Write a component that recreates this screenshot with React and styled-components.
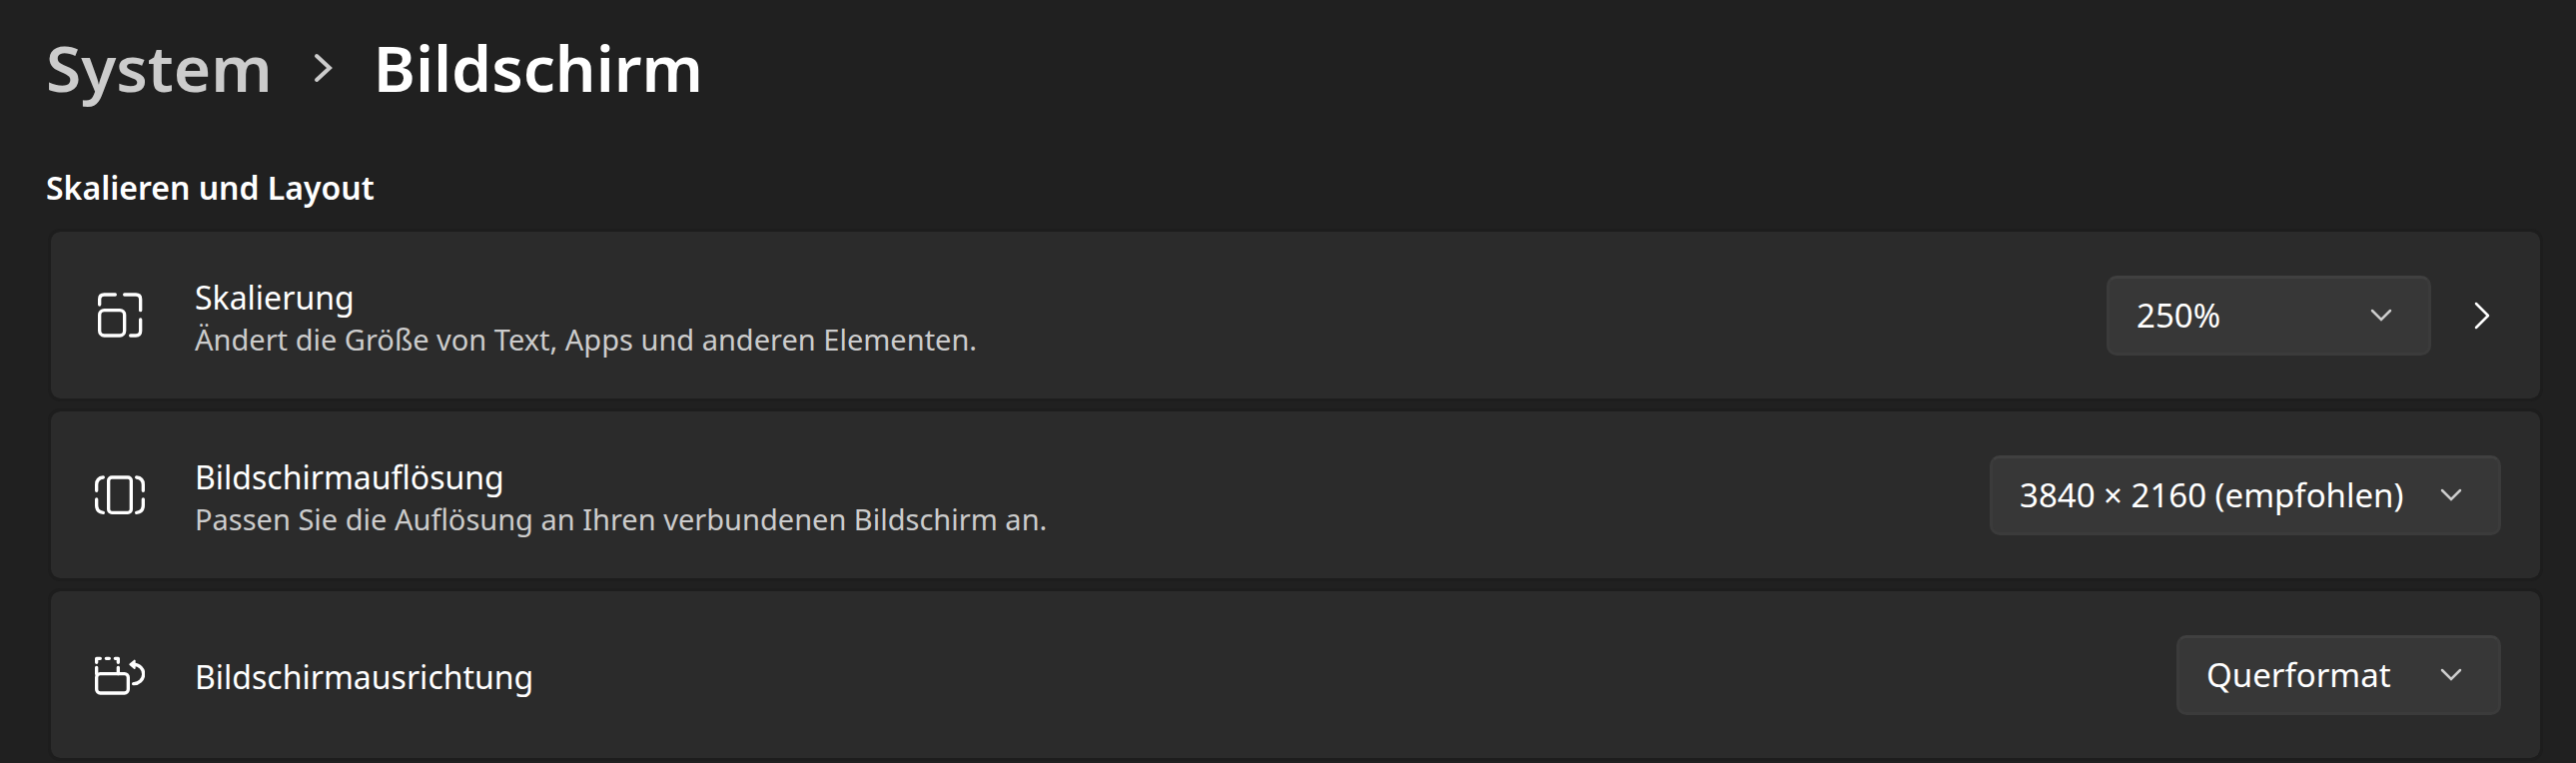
import React, { useState } from "react";
import styled, { createGlobalStyle } from "styled-components";

// Styles
const GlobalStyle = createGlobalStyle`
    * {
        box-sizing: border-box;
    }
    body {
        margin: 0;
        background: #202020;
        color: #fff;
        font-family: "Noto Sans", "Open Sans", sans-serif;
    }
`
const Page = styled.main`
    padding: 20px 33px 0 46px;
`
const Breadcrumb = styled.nav`
    display: flex;
    align-items: center;
    height: 96px;
    font-size: 64px;
    font-weight: 600;
    line-height: 96px;
`
const CrumbLink = styled.a`
    color: #cccccc;
    text-decoration: none;
`
const CrumbChevron = styled.svg`
    width: 20px;
    height: 30px;
    margin: 0 40px 0 41px;
    color: #cccccc;
`
const CrumbTitle = styled.h1`
    margin: 0;
    font-size: 64px;
    font-weight: 600;
`
const SectionTitle = styled.h2`
    margin: 48px 0 17px;
    font-size: 32px;
    font-weight: 600;
    line-height: 48px;
`
const CardList = styled.div`
    display: flex;
    flex-direction: column;
    gap: 7px;
    padding-left: 2px;
`
const Card = styled.section`
    display: flex;
    align-items: center;
    min-height: 173px;
    padding: 0 39px 0 44px;
    background: #2b2b2b;
    background-clip: padding-box;
    border: 3px solid #1d1d1d;
    border-radius: 12px;
`
const CardIcon = styled.svg`
    flex: none;
    width: 50px;
    height: 50px;
    margin-right: 50px;
    fill: none;
    stroke: #fff;
    stroke-width: 10;
    stroke-linecap: round;
    stroke-linejoin: round;
`
const CardText = styled.div`
    flex: 1;
    padding-top: 4px;
`
const CardLabel = styled.label`
    display: block;
    font-size: 32px;
    line-height: 44px;
`
const CardHint = styled.p`
    margin: 0;
    font-size: 29px;
    line-height: 40px;
    color: #cccccc;
`
const SelectBox = styled.div`
    display: grid;
    align-items: center;
    min-width: 325px;
`
const Select = styled.select`
    grid-area: 1 / 1;
    appearance: none;
    height: 80px;
    padding: 0 94px 0 27px;
    background: #373737;
    border: 3px solid #3b3b3b;
    border-top-color: #404040;
    border-radius: 10px;
    color: #fff;
    font-family: inherit;
    font-size: 33px;
`
const SelectChevron = styled.svg`
    grid-area: 1 / 1;
    justify-self: end;
    width: 22px;
    height: 13px;
    margin-right: 39px;
    color: #cccccc;
    pointer-events: none;
`
const MoreButton = styled.button`
    display: flex;
    margin: 0 10px 0 42px;
    padding: 0;
    background: transparent;
    border: none;
    color: #fff;
    cursor: pointer;
`
const MoreChevron = styled.svg`
    width: 18px;
    height: 30px;
`

const ScaleIcon = () => (
    <CardIcon viewBox="0 0 150 150" aria-hidden="true">
        <path d="M14 42V26Q14 12 28 12H61M89 12H123Q137 12 137 26V59M137 87V121Q137 135 123 135H107" />
        <rect x="14" y="59" width="75" height="76" rx="14" />
    </CardIcon>
)

const ResolutionIcon = () => (
    <CardIcon viewBox="0 0 150 150" aria-hidden="true">
        <rect x="41" y="21" width="68" height="106" rx="10" />
        <path d="M25 21Q5 23 5 43V61M5 87V105Q5 125 25 127M125 21Q145 23 145 43V61M145 87V105Q145 125 125 127" />
    </CardIcon>
)

const OrientationIcon = () => (
    <CardIcon viewBox="0 0 150 150" aria-hidden="true">
        <path d="M5 37V25H16M34 25H43M61 25H70V37M5 52V71M70 52V71" />
        <rect x="5" y="71" width="95" height="58" rx="11" />
        <path d="M118 43A29 29 0 0 1 116 101" />
        <path d="M106 43L119 32V54Z" fill="#fff" strokeWidth="6" />
    </CardIcon>
)

// Constants
const settings = [
    {
        id: "scale",
        icon: ScaleIcon,
        label: "Skalierung",
        hint: "Ändert die Größe von Text, Apps und anderen Elementen.",
        value: "250%",
        hasMore: true
    },
    {
        id: "resolution",
        icon: ResolutionIcon,
        label: "Bildschirmauflösung",
        hint: "Passen Sie die Auflösung an Ihren verbundenen Bildschirm an.",
        value: "3840 × 2160 (empfohlen)"
    },
    {
        id: "orientation",
        icon: OrientationIcon,
        label: "Bildschirmausrichtung",
        value: "Querformat"
    }
];

function SettingCard({ setting }) {
    const [value, setValue] = useState(setting.value);
    const Icon = setting.icon;

    return (
        <Card>
            <Icon />
            <CardText>
                <CardLabel htmlFor={setting.id}>{setting.label}</CardLabel>
                {setting.hint && <CardHint>{setting.hint}</CardHint>}
            </CardText>
            <SelectBox>
                <Select id={setting.id} value={value} onChange={(e) => setValue(e.target.value)}>
                    <option>{setting.value}</option>
                </Select>
                <SelectChevron viewBox="0 0 22 13" fill="none" stroke="currentColor" strokeWidth="2.5" strokeLinecap="round">
                    <path d="M2 2L11 11L20 2" />
                </SelectChevron>
            </SelectBox>
            {setting.hasMore && (
                <MoreButton type="button" aria-label="Skalierung öffnen">
                    <MoreChevron viewBox="0 0 18 30" fill="none" stroke="currentColor" strokeWidth="2.5" strokeLinecap="round" strokeLinejoin="round">
                        <path d="M3 3L15 15L3 27" />
                    </MoreChevron>
                </MoreButton>
            )}
        </Card>
    );
}

export default function App() {
    return (
        <Page>
            <GlobalStyle />
            <Breadcrumb aria-label="Navigationspfad">
                <CrumbLink href="#system">System</CrumbLink>
                <CrumbChevron viewBox="0 0 20 30" fill="none" stroke="currentColor" strokeWidth="4" strokeLinecap="round">
                    <path d="M3 3L16 15L3 27" />
                </CrumbChevron>
                <CrumbTitle>Bildschirm</CrumbTitle>
            </Breadcrumb>
            <SectionTitle>Skalieren und Layout</SectionTitle>
            <CardList>
                {settings.map((setting) => (
                    <SettingCard key={setting.id} setting={setting} />
                ))}
            </CardList>
        </Page>
    );
}
